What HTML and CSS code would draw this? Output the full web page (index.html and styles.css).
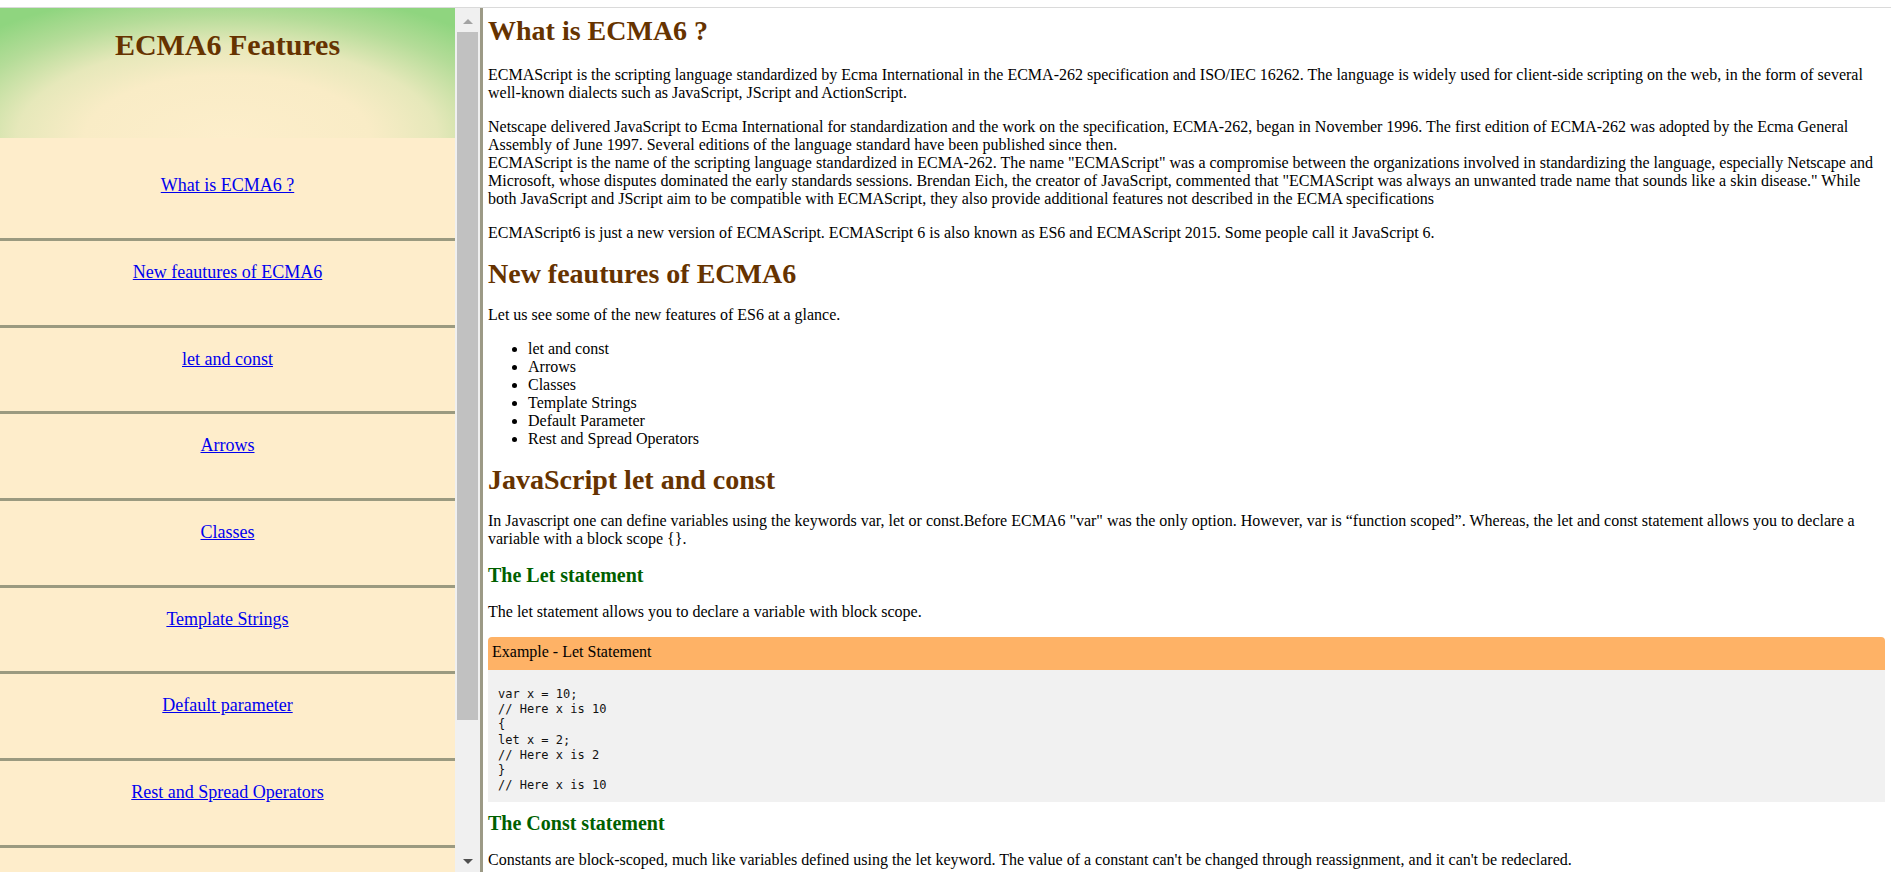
FILE: index.html
```html
<!DOCTYPE html>
<html lang="en">
<head>
<meta charset="utf-8">
<title>ECMA6 Features</title>
<link rel="stylesheet" href="styles.css">
</head>
<body>
<div class="top-gap"></div>
<div class="frames">
  <aside class="sidebar">
    <div class="sidebar-head"><h1>ECMA6 Features</h1></div>
    <nav class="nav">
      <div class="nav-item"><a href="#what">What is ECMA6 ?</a></div>
      <div class="nav-item"><a href="#new">New feautures of ECMA6</a></div>
      <div class="nav-item"><a href="#let">let and const</a></div>
      <div class="nav-item"><a href="#arrows">Arrows</a></div>
      <div class="nav-item"><a href="#classes">Classes</a></div>
      <div class="nav-item"><a href="#template">Template Strings</a></div>
      <div class="nav-item"><a href="#default">Default parameter</a></div>
      <div class="nav-item"><a href="#rest">Rest and Spread Operators</a></div>
      <div class="nav-item"><a href="#modules">Modules</a></div>
    </nav>
  </aside>
  <div class="scrollbar">
    <div class="sb-btn sb-up"><span class="tri-up"></span></div>
    <div class="sb-track"><div class="sb-thumb"></div></div>
    <div class="sb-btn sb-down"><span class="tri-down"></span></div>
  </div>
  <div class="divider"></div>
  <main class="content">
    <h2 class="sec-title" id="what">What is ECMA6 ?</h2>
    <p>ECMAScript is the scripting language standardized by Ecma International in the ECMA-262 specification and ISO/IEC 16262. The language is widely used for client-side scripting on the web, in the form of several well-known dialects such as JavaScript, JScript and ActionScript.</p>
    <p>Netscape delivered JavaScript to Ecma International for standardization and the work on the specification, ECMA-262, began in November 1996. The first edition of ECMA-262 was adopted by the Ecma General Assembly of June 1997. Several editions of the language standard have been published since then.<br>ECMAScript is the name of the scripting language standardized in ECMA-262. The name "ECMAScript" was a compromise between the organizations involved in standardizing the language, especially Netscape and Microsoft, whose disputes dominated the early standards sessions. Brendan Eich, the creator of JavaScript, commented that "ECMAScript was always an unwanted trade name that sounds like a skin disease." While both JavaScript and JScript aim to be compatible with ECMAScript, they also provide additional features not described in the ECMA specifications</p>
    <p>ECMAScript6 is just a new version of ECMAScript. ECMAScript 6 is also known as ES6 and ECMAScript 2015. Some people call it JavaScript 6.</p>

    <h2 class="sec-title" id="new">New feautures of ECMA6</h2>
    <p>Let us see some of the new features of ES6 at a glance.</p>
    <ul class="feature-list">
      <li>let and const</li>
      <li>Arrows</li>
      <li>Classes</li>
      <li>Template Strings</li>
      <li>Default Parameter</li>
      <li>Rest and Spread Operators</li>
    </ul>

    <h2 class="sec-title" id="let">JavaScript let and const</h2>
    <p>In Javascript one can define variables using the keywords var, let or const.Before ECMA6 "var" was the only option. However, var is “function scoped”. Whereas, the let and const statement allows you to declare a variable with a block scope {}.</p>
    <h3 class="sub-title">The Let statement</h3>
    <p>The let statement allows you to declare a variable with block scope.</p>
    <div class="example">
      <div class="example-head">Example - Let Statement</div>
      <pre class="example-code">var x = 10;
// Here x is 10
{
let x = 2;
// Here x is 2
}
// Here x is 10</pre>
    </div>
    <h3 class="sub-title">The Const statement</h3>
    <p>Constants are block-scoped, much like variables defined using the let keyword. The value of a constant can't be changed through reassignment, and it can't be redeclared.</p>
  </main>
</div>
</body>
</html>
```
FILE: styles.css
```css
html, body {
  margin: 0;
  padding: 0;
  height: 100%;
  overflow: hidden;
  background: #ffffff;
}

body {
  font-family: "Liberation Serif", "Times New Roman", serif;
  font-size: 16px;
  color: #000000;
}

.top-gap {
  height: 7px;
  border-bottom: 1px solid #dadada;
  background: #ffffff;
}

.frames {
  display: flex;
  height: 864px;
}

/* ---------- Sidebar ---------- */
.sidebar {
  width: 455px;
  flex: 0 0 455px;
  background: #feedcb;
  overflow: hidden;
}

.sidebar-head {
  height: 130px;
  box-sizing: border-box;
  padding-top: 20px;
  text-align: center;
  background: radial-gradient(ellipse 340px 150px at 50% 100%,
      #fdeecb 0%, #f9ecc6 42%, #e6e8ba 62%, #b4dc98 82%, #8fd57f 100%);
}

.sidebar-head h1 {
  margin: 0;
  font-size: 30px;
  font-weight: bold;
  color: #663300;
}

.nav-item {
  height: 62.71px;
  padding-top: 21px;
  border-bottom: 3px solid #9b9a80;
  text-align: center;
  font-size: 18px;
  line-height: 21px;
}

.nav-item:first-child {
  padding-top: 37px;
  height: 62.8px;
}

.nav-item a {
  color: #0000ee;
  text-decoration: underline;
}

/* ---------- Fake frame scrollbar ---------- */
.scrollbar {
  width: 25px;
  flex: 0 0 25px;
  background: #f0f0f0;
  display: flex;
  flex-direction: column;
}

.sb-btn {
  height: 24px;
  flex: 0 0 24px;
  display: flex;
  align-items: center;
  justify-content: center;
  box-sizing: border-box;
  padding-top: 3px;
}

.tri-up {
  width: 0;
  height: 0;
  border-left: 5.5px solid transparent;
  border-right: 5.5px solid transparent;
  border-bottom: 5px solid #a3a3a3;
}

.tri-down {
  width: 0;
  height: 0;
  border-left: 5.5px solid transparent;
  border-right: 5.5px solid transparent;
  border-top: 5px solid #505050;
}

.sb-track {
  flex: 1;
  padding: 0 2px;
}

.sb-thumb {
  height: 688px;
  background: #c1c1c1;
}

.divider {
  width: 3px;
  flex: 0 0 3px;
  background: #9c9a86;
}

/* ---------- Content ---------- */
.content {
  flex: 1;
  min-width: 0;
  overflow: hidden;
  padding: 7px 6px 0 5px;
  line-height: 18px;
}

.content p {
  margin: 16px 0;
}

.sec-title {
  margin: 15px 0 16px;
  font-size: 28px;
  line-height: 32px;
  font-weight: bold;
  color: #663300;
}

.content > .sec-title:first-child {
  margin-top: 0;
  margin-bottom: 18.5px;
}

.sub-title {
  margin: 16px 0;
  font-size: 20px;
  line-height: 23px;
  font-weight: bold;
  color: #005f00;
}

.feature-list {
  margin: 16px 0;
  padding-left: 40px;
}

.example {
  margin: 16px 0 10px;
}

.example + .sub-title {
  margin-top: 10px;
}

.example-head {
  height: 33px;
  line-height: 30px;
  padding: 0 4px;
  background: #feb266;
  border-radius: 4px 4px 0 0;
}

.example-code {
  margin: 0;
  padding: 17.5px 10px 8.5px;
  background: #f1f1f1;
  font-family: "DejaVu Sans Mono", "Liberation Mono", monospace;
  font-size: 12px;
  line-height: 15.2px;
  color: #111111;
}
```
